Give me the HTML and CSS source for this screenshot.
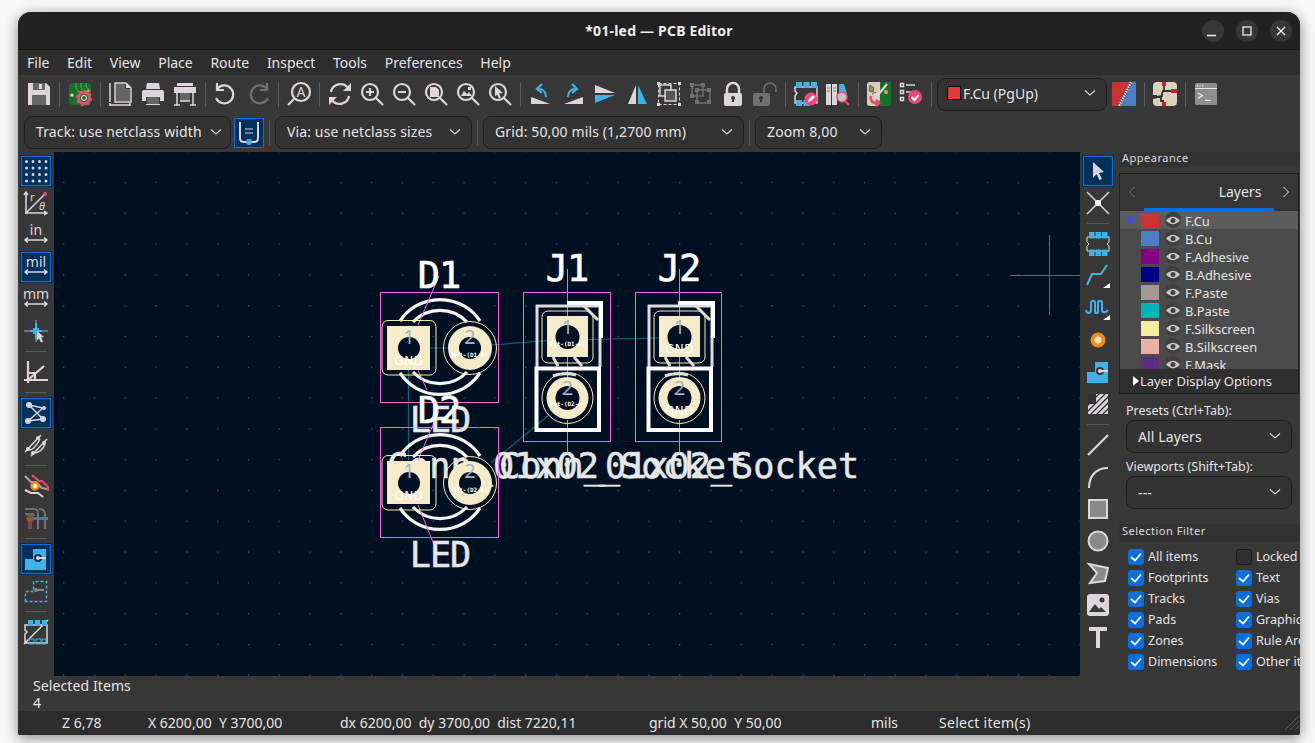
FILE: index.html
```html
<!DOCTYPE html>
<html lang="en">
<head>
<meta charset="utf-8">
<title>*01-led — PCB Editor</title>
<link rel="stylesheet" href="styles.css">
</head>
<body>
<div class="window">
  <header class="titlebar">
    <span></span>
    <div class="title">*01-led — PCB Editor</div>
    <div class="winbtns">
      <span class="winbtn"><svg width="12" height="12" viewBox="0 0 12 12"><path d="M0 10.5h9" class="w"/></svg></span>
      <span class="winbtn"><svg width="12" height="12" viewBox="0 0 12 12"><rect x="2" y="2" width="8" height="8" class="w"/></svg></span>
      <span class="winbtn"><svg width="12" height="12" viewBox="0 0 12 12"><path d="M2 2l8 8M10 2l-8 8" class="w"/></svg></span>
    </div>
  </header>
  <nav class="menubar"><span>File</span><span>Edit</span><span>View</span><span>Place</span><span>Route</span><span>Inspect</span><span>Tools</span><span>Preferences</span><span>Help</span></nav>

  <div class="toolbar">
    <span class="tb"><svg class="ic" viewBox="0 0 24 24"><path class="l" d="M1 1h18l4 4v18H1z"/><path class="g" d="M6 1h12v7H6z"/><path class="l" d="M12 2h3v5h-3z"/><path class="g" d="M5 13h14v10H5z"/></svg></span>
    <i class="vs"></i>
    <span class="tb"><svg class="ic" viewBox="0 0 24 24"><rect x="1" y="1" width="22" height="22" rx="4" fill="#17702b"/><path d="M8 1v6l6 5M13 1v5l6 5M18 1v4l5 4M1 14h5" stroke="#4fae5d" fill="none"/><circle cx="4" cy="13" r="1.5" fill="#f2e5a0"/><circle cx="20" cy="9" r="1.5" fill="#f2a13b"/><circle cx="16" cy="16" r="5.5" fill="none" stroke="#ec4a73" stroke-width="3"/><circle cx="16" cy="16" r="7" fill="none" stroke="#ec4a73" stroke-width="2.5" stroke-dasharray="3 2.5"/><circle cx="16" cy="16" r="2.5" fill="#17702b" stroke="#fff"/></svg></span>
    <i class="vs"></i>
    <span class="tb"><svg class="ic" viewBox="0 0 24 24"><path class="f" d="M1 1v19M6 20V1h11l5 5v14z"/><path class="l" d="M17 1v5h5"/><path class="g" d="M7 2h9v5h5v12H7z"/><path class="f" d="M1 23h20M1 21v3M21 21v3"/></svg></span>
    <span class="tb"><svg class="ic" viewBox="0 0 24 24"><path class="l" d="M6 1h12l1 6H5z"/><path class="l" d="M3 8h18q2 0 2 2v9h-4v-4H5v4H1v-9q0-2 2-2z"/><path class="g" d="M6 15h12v7H6z"/><path class="l" d="M5 22h14v1H5z"/></svg></span>
    <span class="tb"><svg class="ic" viewBox="0 0 24 24"><path class="l" d="M4 1h16v3H4z"/><path class="l" d="M1 5h22v6H1z"/><path class="g" d="M7 11h10v8H7z"/><path class="f" d="M4 11v12M20 11v12M1 23h6M17 23h6M7 19h10"/></svg></span>
    <i class="vs"></i>
    <span class="tb"><svg class="ic" viewBox="0 0 24 24"><path class="f fw" d="M3 7a9 9 0 1 1-1 9M3 1v7h7"/></svg></span>
    <span class="tb"><svg class="ic" viewBox="0 0 24 24"><path class="d dw" d="M21 7a9 9 0 1 0 1 9M21 1v7h-7"/></svg></span>
    <i class="vs"></i>
    <span class="tb"><svg class="ic" viewBox="0 0 24 24"><circle class="f fw" cx="14" cy="10" r="9"/><path class="f fw" d="M7 17l-6 6"/><text x="14" y="15" text-anchor="middle" class="ict ict13">A</text></svg></span>
    <i class="vs"></i>
    <span class="tb"><svg class="ic" viewBox="0 0 24 24"><path class="f fw" d="M3 10a9.5 9.5 0 0 1 17-4M21 14a9.5 9.5 0 0 1-17 4"/><path class="l" d="M23 1v8h-8zM1 23v-8h8z"/></svg></span>
    <span class="tb"><svg class="ic" viewBox="0 0 24 24"><circle class="f fw" cx="10" cy="10" r="8"/><path class="f fw" d="M16 16l7 7M6 10h8M10 6v8"/></svg></span>
    <span class="tb"><svg class="ic" viewBox="0 0 24 24"><circle class="f fw" cx="10" cy="10" r="8"/><path class="f fw" d="M16 16l7 7M6 10h8"/></svg></span>
    <span class="tb"><svg class="ic" viewBox="0 0 24 24"><circle class="f fw" cx="10" cy="10" r="8"/><path class="f fw" d="M16 16l7 7"/><path class="l" d="M6 5h6l3 3v7H6z"/></svg></span>
    <span class="tb"><svg class="ic" viewBox="0 0 24 24"><circle class="f fw" cx="10" cy="10" r="8"/><path class="f fw" d="M16 16l7 7"/><path class="l" d="M5 14l3-5 3 3 2-2 3 4zM12 5h3v3h-3z"/></svg></span>
    <span class="tb"><svg class="ic" viewBox="0 0 24 24"><circle class="f fw" cx="10" cy="10" r="8"/><path class="f fw" d="M16 16l7 7"/><path class="l" d="M7 4l8 7-4 .5 2 4-2 1-2-4-2 2z"/></svg></span>
    <i class="vs"></i>
    <span class="tb"><svg class="ic" viewBox="0 0 24 24"><path class="l" d="M2 22v-7l19 7z"/><path class="bs" d="M17 15c0-5-3-8-7-8M13 2L8 7l5 4"/></svg></span>
    <span class="tb"><svg class="ic" viewBox="0 0 24 24"><path class="l" d="M22 22v-7L3 22z"/><path class="bs" d="M7 15c0-5 3-8 7-8M11 2l5 5-5 4"/></svg></span>
    <span class="tb"><svg class="ic" viewBox="0 0 24 24"><path class="l" d="M2 3l20 8H2z"/><path class="b" d="M2 13h20L2 21z"/></svg></span>
    <span class="tb"><svg class="ic" viewBox="0 0 24 24"><path class="l" d="M11 3v19H3z"/><path class="b" d="M13 3v19h9z"/></svg></span>
    <span class="tb"><svg class="ic" viewBox="0 0 24 24"><rect x="1.5" y="1.5" width="21" height="21" class="dash"/><path class="l" d="M0 0h3v3H0zM21 0h3v3h-3zM0 21h3v3H0zM21 21h3v3h-3z"/><rect x="3" y="3" width="11" height="11" class="f"/><rect x="8" y="8" width="11" height="11" class="l2"/></svg></span>
    <span class="tb"><svg class="ic" viewBox="0 0 24 24"><rect x="3" y="3" width="11" height="11" class="d"/><rect x="8" y="8" width="13" height="13" class="d" fill="#555"/><path class="g2" d="M1 1h4v4H1zM12 1h4v4h-4zM1 12h4v4H1zM6 6h4v4H6zM18 6h4v4h-4zM6 18h4v4H6zM18 18h4v4h-4z"/></svg></span>
    <span class="tb"><svg class="ic" viewBox="0 0 24 24"><path class="f fw2" d="M6 12V7a6 6 0 0 1 12 0v5"/><rect x="3" y="11" width="18" height="13" rx="2" class="l"/><circle cx="12" cy="16" r="2" fill="#383838"/><path d="M11 16h2v4h-2z" fill="#383838"/></svg></span>
    <span class="tb"><svg class="ic" viewBox="0 0 24 24"><path class="d fw2" d="M11 12V7a5.500 5.500 0 0 1 12 0v3"/><rect x="0" y="11" width="17" height="13" rx="2" class="g2"/><circle cx="8" cy="16" r="2" fill="#383838"/><path d="M7 16h2v4H7z" fill="#383838"/></svg></span>
    <i class="vs"></i>
    <span class="tb"><svg class="ic" viewBox="0 0 24 24"><path class="f" d="M1 5v4l2 2-2 3v7h22V5z"/><path class="b" d="M2 0h6v6H2zM9.500 0h6v6h-6zM17 0h6v6h-6zM2 18h6v6H2zM9.500 18h6v6h-6z"/><circle cx="17" cy="17" r="6.500" fill="#ec4a73"/><path d="M14 20l1-3 4-4 2 2-4 4z" fill="#fff"/></svg></span>
    <span class="tb"><svg class="ic" viewBox="0 0 24 24"><path class="l" d="M0 2h5v21H0zM6 2h5v21H6z"/><path d="M1 6h3M7 6h3M1 9h3M7 9h3" stroke="#777"/><path class="b" d="M13 2h5l3 10h-8z"/><circle cx="16" cy="15" r="5" fill="#c4c4c4" stroke="#ec4a73" stroke-width="1.500"/><path d="M19 19l4 4" stroke="#ec4a73" stroke-width="2"/></svg></span>
    <i class="vs"></i>
    <span class="tb"><svg class="ic" viewBox="0 0 24 24"><rect width="24" height="24" rx="3" fill="#d8cfb2"/><path d="M13 0h11v24H10l3-6z" fill="#17702b"/><path d="M20 2L7 18" stroke="#ddd" stroke-width="2"/><path d="M3 3l4 3-1 4-4-1zM9 10l-4 2" stroke="#666" fill="#888"/><circle cx="19" cy="10" r="2" fill="#f2a13b"/><path d="M4 14c-1 5 2 8 7 7M9 18l3 3-3 3" stroke="#ec4a73" stroke-width="2.500" fill="none"/></svg></span>
    <span class="tb"><svg class="ic" viewBox="0 0 24 24"><path class="f" d="M1.500 1.500h3v3h-3zM1.500 8.500h3v3h-3zM1.500 15.500h3v3h-3zM7 3h9M7 10h5"/><circle cx="16" cy="15" r="7" fill="#ec4a73"/><path d="M12.500 15l3 3 4-5" fill="none" stroke="#fff" stroke-width="2"/></svg></span>
    <i class="vs"></i>
    <div class="combo combo-layer"><span class="swatch"></span><span class="combo-txt">F.Cu (PgUp)</span><svg class="chev" viewBox="0 0 12 8"><path d="M1 1.500l5 4.500 5-4.500"/></svg></div>
    <span class="tb tb-after"><svg class="ic" viewBox="0 0 24 24"><path d="M0 0h18L6 24H0z" fill="#c83434"/><path d="M20 0h4v24H8z" fill="#4d7fc4"/><path d="M19 0L7 24" stroke="#fff" stroke-width="2" stroke-dasharray="1.500 1"/></svg></span>
    <i class="vs"></i>
    <span class="tb"><svg class="ic" viewBox="0 0 24 24"><rect width="24" height="24" rx="4" fill="#dcd2b9"/><path d="M9 0h4v4H9zM18 7h6v4h-6zM9 20h4v4H9z" fill="#c8203c"/><path d="M11 4v4l-2 3v3l-9 2M9 9h9M8 14v5h3M0 14h4" stroke="#333" stroke-width="1.800" fill="none"/></svg></span>
    <i class="vs"></i>
    <span class="tb"><svg class="ic ic22" viewBox="0 0 24 24"><rect width="24" height="24" rx="2" fill="#8e8e8e"/><path d="M0 6h24" stroke="#eee"/><path d="M2 3h1M5 3h1M8 3h1" stroke="#eee" stroke-width="2"/><path d="M3 11l5 3-5 3M11 19h6" stroke="#eee" fill="none" stroke-width="1.300"/></svg></span>
  </div>

  <div class="auxbar">
    <div class="combo combo-track"><span class="combo-txt">Track: use netclass width</span><svg class="chev" viewBox="0 0 12 8"><path d="M1 1.500l5 4.500 5-4.500"/></svg></div>
    <span class="auxtoggle"><svg width="24" height="26" viewBox="0 0 24 26"><path d="M3 2v16q0 4 4 4h10q4 0 4-4V2" fill="none" stroke="#ddd5dc" stroke-width="2"/><path d="M8 9h8M8 13h8" stroke="#ddd5dc"/><circle cx="12" cy="22" r="3" fill="#3db3e8"/></svg></span>
    <i class="vs2"></i>
    <div class="combo combo-via"><span class="combo-txt">Via: use netclass sizes</span><svg class="chev" viewBox="0 0 12 8"><path d="M1 1.500l5 4.500 5-4.500"/></svg></div>
    <i class="vs2"></i>
    <div class="combo combo-grid"><span class="combo-txt">Grid: 50,00 mils (1,2700 mm)</span><svg class="chev" viewBox="0 0 12 8"><path d="M1 1.500l5 4.500 5-4.500"/></svg></div>
    <i class="vs2"></i>
    <div class="combo combo-zoom"><span class="combo-txt">Zoom 8,00</span><svg class="chev" viewBox="0 0 12 8"><path d="M1 1.500l5 4.500 5-4.500"/></svg></div>
  </div>

  <div class="main">
    <aside class="ltb">
      <span class="tb on"><svg class="ic" viewBox="0 0 24 24"><path d="M2.500 2.500h21M2.500 9h21M2.500 15.500h21M2.500 22h21" stroke="#ddd5dc" stroke-width="3" stroke-linecap="round" stroke-dasharray="0 6.500" fill="none"/></svg></span>
      <span class="tb"><svg class="ic" viewBox="0 0 24 24"><path class="f" d="M2 23V1M0 4l2-3 2 3M1 22h22M20 20l3 2-3 2M2 22L21 3"/><circle cx="21" cy="3" r="2" fill="#ec4a73"/><text x="6" y="10" class="ict ict11">r</text><text x="15" y="19" class="ict ict11 ital">θ</text></svg></span>
      <span class="tb"><svg class="ic" viewBox="0 0 24 24"><text x="12" y="12" text-anchor="middle" class="ict ict13">in</text><path class="f" d="M1 17h22M4 14.500L1 17l3 2.500M20 14.500l3 2.500-3 2.500"/></svg></span>
      <span class="tb on"><svg class="ic" viewBox="0 0 24 24"><text x="12" y="12" text-anchor="middle" class="ict ict13">mil</text><path class="f" d="M1 17h22M4 14.500L1 17l3 2.500M20 14.500l3 2.500-3 2.500"/></svg></span>
      <span class="tb"><svg class="ic" viewBox="0 0 24 24"><text x="12" y="12" text-anchor="middle" class="ict ict13">mm</text><path class="f" d="M1 17h22M4 14.500L1 17l3 2.500M20 14.500l3 2.500-3 2.500"/></svg></span>
      <span class="tb"><svg class="ic" viewBox="0 0 24 24"><path d="M0 12h24M12 1v22" stroke="#a9a3a8"/><path class="b" d="M9 9h6v6H9zM11 4h2v16h-2zM6 11h12v2H6z"/><path class="l" d="M13 12l7 6-3 .5 2 4-2 1-2-4-2 2z"/></svg></span>
      <i class="hs"></i>
      <span class="tb"><svg class="ic" viewBox="0 0 24 24"><path class="f fw" d="M4 1v22M0 20h24M4 20L20 6M4 13h7v7"/></svg></span>
      <i class="hs"></i>
      <span class="tb on"><svg class="ic" viewBox="0 0 24 24"><path class="f" d="M5 4l14 14M5 4l14 3M19 7L4 20M4 20l15-2"/><circle cx="5" cy="4" r="3" class="l"/><circle cx="20" cy="7" r="2" class="l"/><circle cx="4" cy="20" r="3" class="l"/><circle cx="19" cy="18" r="3" class="l"/></svg></span>
      <span class="tb"><svg class="ic" viewBox="0 0 24 24"><path class="f" d="M1 19L17 2M7 23L23 6"/><path class="f" d="M5 17c4 0 8-5 11-11M9 20c5 0 10-3 12-9"/><circle cx="4" cy="16" r="2" class="l"/><circle cx="14" cy="5" r="2" class="l"/><circle cx="9" cy="20" r="2" class="l"/><circle cx="20" cy="10" r="2" class="l"/></svg></span>
      <i class="hs"></i>
      <span class="tb"><svg class="ic" viewBox="0 0 24 24"><path d="M1 2l6 6h5l6 6 5 1" stroke="#a9a3a8" stroke-width="2" fill="none"/><path d="M8 1l7 6h3l6 6v4" stroke="#ec4a73" stroke-width="2" fill="none"/><path d="M1 16l6 3h7l5 4" stroke="#ddd5dc" stroke-width="2" fill="none"/><circle cx="11" cy="12" r="3.500" fill="#fff" stroke="#f28c14" stroke-width="2.500"/></svg></span>
      <span class="tb"><svg class="ic" viewBox="0 0 24 24"><path d="M1 3h9q4 0 4 4v16M15 3q6 0 6 5v15M1 8h8q1 0 1 2" stroke="#707070" stroke-width="2" fill="none"/><path d="M6 13v10" stroke="#84414f" stroke-width="4"/><path d="M8 11h16v3H8z" fill="#4a7c99"/><circle cx="6" cy="12" r="3.500" fill="#8d5a2c"/></svg></span>
      <i class="hs"></i>
      <span class="tb on"><svg class="ic" viewBox="0 0 24 24"><path class="b" d="M1 23V12h8V2h13v21z"/><circle cx="14" cy="11" r="4" fill="#00305c"/><path d="M13 10h9v2h-9z" fill="#ddd5dc"/><circle cx="14" cy="11" r="2" fill="#ddd5dc"/></svg></span>
      <span class="tb"><svg class="ic" viewBox="0 0 24 24"><path d="M1.500 22.500V12.500h8v-10h13v20z" fill="none" stroke="#3db3e8" stroke-width="1.500" stroke-dasharray="3 2"/><path class="g3" d="M11 10h9v2h-9z"/><circle cx="12" cy="11" r="2" class="g3"/></svg></span>
      <i class="hs"></i>
      <span class="tb"><svg class="ic" viewBox="0 0 24 24"><path class="f" d="M1 5v5l2 2-2 2v9h22V5zM0 24L24 0"/><path class="b" d="M4 0h5v6H4zM11 0h5v6h-5zM18 0h5v6h-5z"/><path d="M5 19h5v5H5zM12 19h5v5h-5zM18 19h4v5h-4z" fill="none" stroke="#3db3e8"/></svg></span>
    </aside>

    <div class="canvas">
      <svg class="board" viewBox="54 152 1026 524" width="1026" height="524">
        <defs>
          <pattern id="griddots" x="617.500" y="243.500" width="30.800" height="30.800" patternUnits="userSpaceOnUse"><rect width="1.200" height="1.200" fill="#56606c"/></pattern>
        </defs>
        <rect x="54" y="152" width="1026" height="524" fill="#001023"/>
        <rect x="54" y="152" width="1026" height="524" fill="url(#griddots)"/>

        <g class="rats">
          <path d="M430 348h18M492 345l50-4M540 341l70-2M610 339l49-1M408.500 370v90M491 463l58-48"/>
        </g>

        <g class="valtext">
          <text x="499" y="478">Conn_01x02_Socket</text>
          <text x="387" y="478">Conn_01x02_Socket</text>
        </g>

        <g class="silk">
          <path d="M400 321A48 48 0 0 1 480 321M400 373A48 48 0 0 0 480 373M413 322A37 37 0 0 1 467 322M413 372A37 37 0 0 0 467 372"/>
          <path d="M400 456A48 48 0 0 1 480 456M400 508A48 48 0 0 0 480 508M413 457A37 37 0 0 1 467 457M413 507A37 37 0 0 0 467 507"/>
        </g>

        <g class="mag">
          <rect x="380.500" y="292.500" width="118" height="110"/>
          <rect x="380.500" y="427.500" width="118" height="110"/>
          <rect x="523.500" y="292.500" width="87" height="149"/>
          <rect x="635.500" y="292.500" width="86" height="149"/>
          <path d="M439 276L418 325M418 370L427 390M439 411L418 460M418 505L437 552M567.500 269V316M567.500 356V378M567.500 420V453M679.500 269V316M679.500 356V378M679.500 420V453"/>
        </g>

        <g>
          <path class="gsilk" d="M537 367V306H600V367"/>
          <path class="wsilk" d="M567 303H601V338M536.500 368.500H599V430H536.500Z"/>
          <path class="gsilk" d="M583 305l15 15M553 357l5 9M574 357l8 9M553 376q10-4 23-1"/>
        </g>
        <g>
          <path class="gsilk" d="M649 367V306H712V367"/>
          <path class="wsilk" d="M678 303H713V338M648.500 368.500H711V430H648.500Z"/>
          <path class="gsilk" d="M695 305l15 15M665 357l5 9M686 357l8 9M665 376q10-4 23-1"/>
        </g>

        <g class="pads">
          <rect x="387" y="326" width="43" height="44" class="pad"/><circle cx="409" cy="348" r="11" class="hole"/>
          <rect x="382" y="320.500" width="54" height="54.500" rx="6" class="keep"/>
          <circle cx="470" cy="348" r="22" class="pad"/><circle cx="470" cy="348" r="11" class="hole"/><circle cx="470" cy="348" r="26.500" class="keep"/>

          <rect x="387" y="461" width="43" height="43" class="pad"/><circle cx="409" cy="483" r="11" class="hole"/>
          <rect x="382" y="455.500" width="54" height="54.500" rx="6" class="keep"/>
          <circle cx="470" cy="483" r="22" class="pad"/><circle cx="470" cy="483" r="11" class="hole"/><circle cx="470" cy="483" r="26.500" class="keep"/>

          <rect x="547" y="316" width="41" height="41" class="pad"/><circle cx="567.500" cy="337" r="12" class="hole"/>
          <rect x="542" y="311" width="51" height="52" rx="6" class="keep"/>
          <circle cx="567.500" cy="398" r="21" class="pad"/><circle cx="567.500" cy="398" r="12" class="hole"/><circle cx="567.500" cy="398" r="25.500" class="keep"/>

          <rect x="659" y="316" width="41" height="41" class="pad"/><circle cx="679.500" cy="337" r="12" class="hole"/>
          <rect x="654" y="311" width="51" height="52" rx="6" class="keep"/>
          <circle cx="679.500" cy="398" r="21" class="pad"/><circle cx="679.500" cy="398" r="12" class="hole"/><circle cx="679.500" cy="398" r="25.500" class="keep"/>
        </g>

        <g class="padnum">
          <text x="409" y="344">1</text><text x="470" y="344">2</text>
          <text x="409" y="478">1</text><text x="470" y="478">2</text>
          <text x="567.500" y="334">1</text><text x="567.500" y="395">2</text>
          <text x="679.500" y="334">1</text><text x="679.500" y="395">2</text>
        </g>
        <g class="gnd">
          <text x="409" y="365">GND</text><text x="409" y="500">GND</text>
          <text x="679.500" y="353">GND</text><text x="679.500" y="415">GND</text>
        </g>
        <g class="netname">
          <text x="470" y="357">Net-(D1-A)</text><text x="470" y="492">Net-(D2-A)</text>
          <text x="567.500" y="346">Net-(D1-A)</text><text x="567.500" y="406">Net-(D2-A)</text>
        </g>

        <g class="ledtext">
          <text x="440" y="432">LED</text>
          <text x="440" y="567">LED</text>
        </g>
        <g class="reftext">
          <text x="439" y="288">D1</text>
          <text x="439" y="423">D2</text>
          <text x="567" y="281">J1</text>
          <text x="679" y="281">J2</text>
        </g>
        <path class="cross" d="M1010 275.500H1080M1049.500 235V315"/>
      </svg>
    </div>

    <aside class="rtb">
      <span class="tb on"><svg class="ic" viewBox="0 0 24 24"><path class="l" d="M7 3l11 10-5 1 3 6-2.500 1-3-6-3.500 4z"/></svg></span>
      <span class="tb"><svg class="ic" viewBox="0 0 24 24"><path class="f" d="M1 1l22 22M23 1L1 23"/><circle cx="12" cy="12" r="3" fill="#fff"/></svg></span>
      <i class="hs"></i>
      <span class="tb"><svg class="ic" viewBox="0 0 24 24"><path class="f1" d="M1 5v5l2 2-2 2v5h22v-5l-2-2 2-2V5z"/><path class="b" d="M3 0h5.500v6.500H3zM9.500 0H15v6.500H9.500zM16 0h5.500v6.500H16zM3 17.500h5.500V24H3zM9.500 17.500H15V24H9.500zM16 17.500h5.500V24H16z"/></svg></span>
      <span class="tb"><svg class="ic" viewBox="0 0 24 24"><path d="M1 21L6 10H15L21 1" stroke="#3db3e8" stroke-width="2" fill="none"/><path d="M24 19v5h-7z" fill="#fff"/></svg></span>
      <span class="tb"><svg class="ic" viewBox="0 0 24 24"><path d="M0 14c1 4 5 4 5 0V7c0-3 4-3 4 0v8c0 3 3 3 3 0V7c0-3 4-3 4 0v7c0 3 4 3 6 0" stroke="#3db3e8" stroke-width="2" fill="none"/><path d="M24 19v5h-7z" fill="#fff"/></svg></span>
      <span class="tb"><svg class="ic" viewBox="0 0 24 24"><circle cx="12" cy="12" r="5.500" fill="#f2e4c6" stroke="#f28c14" stroke-width="4"/></svg></span>
      <span class="tb"><svg class="ic" viewBox="0 0 24 24"><path class="b" d="M1 23V12h8V2h13v21z"/><circle cx="14" cy="11" r="4" fill="#383838"/><path d="M13 10h9v2h-9z" fill="#ddd5dc"/><circle cx="14" cy="11" r="2" fill="#ddd5dc"/></svg></span>
      <span class="tb"><svg class="ic" viewBox="0 0 24 24"><defs><clipPath id="hatchclip"><path d="M2 22V12h8V2h12v20z"/></clipPath></defs><rect x="2" y="2" width="20" height="20" fill="#333"/><g clip-path="url(#hatchclip)"><path d="M-4 10L14-8M-4 16L20-8M-4 22L26-8M-2 26L28-4M4 26L28 2M10 26L28 8M16 26L28 14" stroke="#ddd5dc" stroke-width="3"/></g></svg></span>
      <i class="hs"></i>
      <span class="tb"><svg class="ic" viewBox="0 0 24 24"><path class="f fw" d="M2 22L22 2"/></svg></span>
      <span class="tb"><svg class="ic" viewBox="0 0 24 24"><path class="f fw" d="M3 23C3 11 10 3 22 3"/></svg></span>
      <span class="tb"><svg class="ic" viewBox="0 0 24 24"><rect x="3" y="3" width="18" height="18" fill="#8a8a8a" stroke="#ddd5dc" stroke-width="2"/></svg></span>
      <span class="tb"><svg class="ic" viewBox="0 0 24 24"><circle cx="12" cy="12" r="9.500" fill="#8a8a8a" stroke="#ddd5dc" stroke-width="2"/></svg></span>
      <span class="tb"><svg class="ic" viewBox="0 0 24 24"><path d="M3 3l19 4-3 13-15 2 7-10z" fill="#8a8a8a" stroke="#ddd5dc" stroke-width="2"/></svg></span>
      <span class="tb"><svg class="ic" viewBox="0 0 24 24"><rect x="1" y="1" width="22" height="22" rx="3" class="l"/><path d="M3 19l6-8 4 5 2-2 5 5z" fill="#383838"/><circle cx="16" cy="7" r="2.500" fill="#383838"/></svg></span>
      <span class="tb"><svg class="ic" viewBox="0 0 24 24"><path class="l" d="M3 2h18v4h-7v17h-4V6H3z"/></svg></span>
    </aside>

    <aside class="side">
      <div class="panelhead">Appearance</div>
      <div class="appbox">
        <div class="tabs"><svg class="tabarrow" viewBox="0 0 8 12"><path d="M6.500 1L1.500 6l5 5" stroke="#777"/></svg><span class="tabname">Layers</span><svg class="tabarrow" viewBox="0 0 8 12"><path d="M1.500 1l5 5-5 5" stroke="#ddd"/></svg></div>
        <div class="layers">
          <div class="layer sel"><i class="marker"></i><i class="sw c1"></i><i class="eye"><svg width="14" height="9" viewBox="0 0 14 9"><path d="M0 4.500Q7-3 14 4.500 7 12 0 4.500z" fill="#c9c4c8"/><circle cx="7" cy="4.500" r="2.500" fill="#444"/></svg></i><span>F.Cu</span></div>
          <div class="layer"><i class="marker"></i><i class="sw c2"></i><i class="eye"><svg width="14" height="9" viewBox="0 0 14 9"><path d="M0 4.500Q7-3 14 4.500 7 12 0 4.500z" fill="#c9c4c8"/><circle cx="7" cy="4.500" r="2.500" fill="#444"/></svg></i><span>B.Cu</span></div>
          <div class="layer"><i class="marker"></i><i class="sw c3"></i><i class="eye"><svg width="14" height="9" viewBox="0 0 14 9"><path d="M0 4.500Q7-3 14 4.500 7 12 0 4.500z" fill="#c9c4c8"/><circle cx="7" cy="4.500" r="2.500" fill="#444"/></svg></i><span>F.Adhesive</span></div>
          <div class="layer"><i class="marker"></i><i class="sw c4"></i><i class="eye"><svg width="14" height="9" viewBox="0 0 14 9"><path d="M0 4.500Q7-3 14 4.500 7 12 0 4.500z" fill="#c9c4c8"/><circle cx="7" cy="4.500" r="2.500" fill="#444"/></svg></i><span>B.Adhesive</span></div>
          <div class="layer"><i class="marker"></i><i class="sw c5"></i><i class="eye"><svg width="14" height="9" viewBox="0 0 14 9"><path d="M0 4.500Q7-3 14 4.500 7 12 0 4.500z" fill="#c9c4c8"/><circle cx="7" cy="4.500" r="2.500" fill="#444"/></svg></i><span>F.Paste</span></div>
          <div class="layer"><i class="marker"></i><i class="sw c6"></i><i class="eye"><svg width="14" height="9" viewBox="0 0 14 9"><path d="M0 4.500Q7-3 14 4.500 7 12 0 4.500z" fill="#c9c4c8"/><circle cx="7" cy="4.500" r="2.500" fill="#444"/></svg></i><span>B.Paste</span></div>
          <div class="layer"><i class="marker"></i><i class="sw c7"></i><i class="eye"><svg width="14" height="9" viewBox="0 0 14 9"><path d="M0 4.500Q7-3 14 4.500 7 12 0 4.500z" fill="#c9c4c8"/><circle cx="7" cy="4.500" r="2.500" fill="#444"/></svg></i><span>F.Silkscreen</span></div>
          <div class="layer"><i class="marker"></i><i class="sw c8"></i><i class="eye"><svg width="14" height="9" viewBox="0 0 14 9"><path d="M0 4.500Q7-3 14 4.500 7 12 0 4.500z" fill="#c9c4c8"/><circle cx="7" cy="4.500" r="2.500" fill="#444"/></svg></i><span>B.Silkscreen</span></div>
          <div class="layer"><i class="marker"></i><i class="sw c9"></i><i class="eye"><svg width="14" height="9" viewBox="0 0 14 9"><path d="M0 4.500Q7-3 14 4.500 7 12 0 4.500z" fill="#c9c4c8"/><circle cx="7" cy="4.500" r="2.500" fill="#444"/></svg></i><span>F.Mask</span></div>
        </div>
        <div class="ldo"><svg width="6" height="10" viewBox="0 0 6 10"><path d="M0 0l6 5-6 5z" fill="#fff"/></svg><span>Layer Display Options</span></div>
      </div>
      <label class="fieldlabel">Presets (Ctrl+Tab):</label>
      <div class="combo combo-side"><span class="combo-txt">All Layers</span><svg class="chev" viewBox="0 0 12 8"><path d="M1 1.500l5 4.500 5-4.500"/></svg></div>
      <label class="fieldlabel fl2">Viewports (Shift+Tab):</label>
      <div class="combo combo-side"><span class="combo-txt">---</span><svg class="chev" viewBox="0 0 12 8"><path d="M1 1.500l5 4.500 5-4.500"/></svg></div>
      <div class="panelhead ph2">Selection Filter</div>
      <div class="filters">
        <div class="chk"><i class="box on"><svg viewBox="0 0 16 16"><path d="M3 8l4 3.500L13 4.500"/></svg></i><span>All items</span></div>
        <div class="chk"><i class="box"></i><span>Locked items</span></div>
        <div class="chk"><i class="box on"><svg viewBox="0 0 16 16"><path d="M3 8l4 3.500L13 4.500"/></svg></i><span>Footprints</span></div>
        <div class="chk"><i class="box on"><svg viewBox="0 0 16 16"><path d="M3 8l4 3.500L13 4.500"/></svg></i><span>Text</span></div>
        <div class="chk"><i class="box on"><svg viewBox="0 0 16 16"><path d="M3 8l4 3.500L13 4.500"/></svg></i><span>Tracks</span></div>
        <div class="chk"><i class="box on"><svg viewBox="0 0 16 16"><path d="M3 8l4 3.500L13 4.500"/></svg></i><span>Vias</span></div>
        <div class="chk"><i class="box on"><svg viewBox="0 0 16 16"><path d="M3 8l4 3.500L13 4.500"/></svg></i><span>Pads</span></div>
        <div class="chk"><i class="box on"><svg viewBox="0 0 16 16"><path d="M3 8l4 3.500L13 4.500"/></svg></i><span>Graphics</span></div>
        <div class="chk"><i class="box on"><svg viewBox="0 0 16 16"><path d="M3 8l4 3.500L13 4.500"/></svg></i><span>Zones</span></div>
        <div class="chk"><i class="box on"><svg viewBox="0 0 16 16"><path d="M3 8l4 3.500L13 4.500"/></svg></i><span>Rule Areas</span></div>
        <div class="chk"><i class="box on"><svg viewBox="0 0 16 16"><path d="M3 8l4 3.500L13 4.500"/></svg></i><span>Dimensions</span></div>
        <div class="chk"><i class="box on"><svg viewBox="0 0 16 16"><path d="M3 8l4 3.500L13 4.500"/></svg></i><span>Other items</span></div>
      </div>
    </aside>
  </div>

  <div class="msg"><div>Selected Items</div><div>4</div></div>
  <footer class="status">
    <span class="st st1">Z 6,78</span>
    <span class="st st2">X 6200,00  Y 3700,00</span>
    <span class="st st3">dx 6200,00  dy 3700,00  dist 7220,11</span>
    <span class="st st4">grid X 50,00  Y 50,00</span>
    <span class="st st5">mils</span>
    <span class="st st6">Select item(s)</span>
    <svg class="grip" width="18" height="18" viewBox="0 0 18 18"><path d="M17 3L3 17M17 8L8 17M17 13l-4 4" stroke="#555" fill="none"/></svg>
  </footer>
</div>
</body>
</html>
```
FILE: styles.css
```css
* { box-sizing: border-box; }
html, body { margin: 0; height: 100%; }
body {
  width: 1315px; height: 743px; overflow: hidden;
  background: #f7f7f7;
  font-family: "Noto Sans", "Open Sans", sans-serif;
  font-size: 14px; color: #e6e3e6;
}
i { display: block; font-style: normal; }
.window {
  margin: 12px 0 0 18px; width: 1282px; height: 723px;
  background: #383838; border-radius: 13px 13px 2px 2px;
  box-shadow: 0 3px 14px rgba(0,0,0,.45);
  display: flex; flex-direction: column; overflow: hidden;
}
.titlebar {
  height: 38px; flex: none; background: #222; border-bottom: 1px solid #191919;
  display: grid; grid-template-columns: 1fr auto 1fr; align-items: center;
}
.title { font-weight: 700; font-size: 14px; color: #efefef; letter-spacing: .2px; }
.winbtns { display: flex; justify-content: flex-end; gap: 12px; padding-right: 8px; }
.winbtn { width: 22px; height: 22px; border-radius: 50%; background: #373737; display: flex; align-items: center; justify-content: center; }
.w { fill: none; stroke: #f0f0f0; stroke-width: 1.3; }
.menubar { height: 25px; flex: none; background: #2e2e2e; display: flex; align-items: center; padding-left: 1px; gap: 1.700px; }
.menubar span { padding: 0 8px; font-size: 14px; }
.toolbar { height: 38px; flex: none; display: flex; align-items: center; padding-left: 5px; }
.tb { width: 32px; height: 32px; flex: none; display: flex; align-items: center; justify-content: center; }
.ic { width: 24px; height: 24px; display: block; overflow: visible; }
.ic22 { width: 22px; height: 22px; }
.vs { width: 9px; height: 25px; flex: none; display: flex; justify-content: center; }
.vs::before { content: ""; width: 1px; background: #5a5a5a; }
.vs2 { width: 1px; height: 25px; margin: 0 5px; background: #5a5a5a; flex: none; }
.hs { height: 9px; width: 22px; margin: 0 auto; display: flex; align-items: center; }
.hs::before { content: ""; height: 1px; width: 22px; background: #5a5a5a; }
.l { fill: #ddd5dc; }
.l2 { fill: #585858; stroke: #ddd5dc; stroke-width: 1.500; }
.g { fill: #666; }
.g2 { fill: #707070; }
.g3 { fill: #8a8a8a; }
.b { fill: #3db3e8; }
.f { fill: none; stroke: #ddd5dc; stroke-width: 1.500; }
.f1 { fill: none; stroke: #ddd5dc; stroke-width: 1; }
.fw { stroke-width: 2.200; }
.fw2 { stroke-width: 2.500; }
.d { fill: none; stroke: #707070; stroke-width: 1.500; }
.dw { stroke-width: 2.200; }
.bs { fill: none; stroke: #3db3e8; stroke-width: 2.200; }
.dash { fill: none; stroke: #ddd5dc; stroke-dasharray: 3 2; }
.ict { font-family: "Noto Sans", sans-serif; fill: #ddd5dc; }
.ict11 { font-size: 11px; }
.ict13 { font-size: 14px; }
.ital { font-style: italic; }
.auxbar { height: 39px; flex: none; display: flex; align-items: center; padding-left: 6px; }
.combo {
  height: 33px; flex: none; border: 1px solid #1f1f1f; border-radius: 8px; background: #333;
  display: flex; align-items: center; justify-content: space-between; padding: 0 10px 2px 11px;
}
.combo-txt { white-space: nowrap; letter-spacing: .12px; }
.chev { width: 12px; height: 8px; flex: none; }
.chev path { fill: none; stroke: #d8d8d8; stroke-width: 1.200; }
.combo-track { width: 207px; padding-right: 8px; }
.combo-via { width: 197px; }
.combo-grid { width: 261px; }
.combo-zoom { width: 127px; }
.combo-layer { width: 170px; margin-left: 1px; justify-content: flex-start; padding-left: 9px; }
.combo-layer .combo-txt { letter-spacing: 0; }
.combo-layer .chev { margin-left: auto; }
.swatch { width: 14px; height: 14px; background: #e03c3c; border: 1px solid #000; margin-right: 2px; flex: none; }
.tb-after { margin-left: 1px; }
.auxtoggle {
  width: 30px; height: 30px; margin-left: 3px; flex: none; background: #00305c; border: 1.500px solid #0a6fdc;
  display: flex; align-items: center; justify-content: center;
}
.main { height: 524px; flex: none; display: flex; }
.ltb { width: 36px; flex: none; padding-top: 3px; display: flex; flex-direction: column; align-items: center; }
.rtb { width: 38px; flex: none; padding: 3px 3px 0 0; display: flex; flex-direction: column; align-items: center; }
.tb.on { background: #00305c; outline: 1.500px solid #0a6fdc; outline-offset: -2.500px; }
.canvas { width: 1026px; flex: none; background: #001023; }
.board { display: block; }
.rats path { fill: none; stroke: #0c6474; stroke-width: 1.200; }
.silk path { fill: none; stroke: #f4f4f4; stroke-width: 3.200; }
.mag rect, .mag path { fill: none; stroke: #ff5fdc; stroke-width: 1; }
.gsilk { fill: none; stroke: #dcdde0; stroke-width: 3; }
.wsilk { fill: none; stroke: #fff; stroke-width: 4; }
.pad { fill: #f5ebc8; }
.hole { fill: #001023; }
.keep { fill: none; stroke: #f5ebb0; stroke-width: 1; }
.padnum text { font-family: "Noto Sans", sans-serif; font-weight: 400; font-size: 20px; fill: #a6b3c2; text-anchor: middle; }
.gnd text { font-family: "DejaVu Sans", sans-serif; font-size: 12px; fill: #fff; text-anchor: middle; letter-spacing: .5px; }
.netname text { font-family: "DejaVu Sans Mono", monospace; font-size: 6px; fill: #fff; font-weight: 700; text-anchor: middle; }
.valtext text { font-family: "DejaVu Sans Mono", monospace; font-size: 35.200px; fill: #e6e6e6; stroke: #e6e6e6; stroke-width: .5; }
.ledtext text { font-family: "DejaVu Sans Mono", monospace; font-size: 35.200px; fill: #e6e6e6; stroke: #e6e6e6; stroke-width: .5; text-anchor: middle; letter-spacing: -1px; }
.reftext text { font-family: "DejaVu Sans Mono", monospace; font-size: 37px; fill: #fff; stroke: #fff; stroke-width: .6; text-anchor: middle; letter-spacing: -1px; }
.cross { fill: none; stroke: #56697a; stroke-width: 1; }
.side { width: 182px; flex: none; overflow: hidden; display: flex; flex-direction: column; padding-left: 1px; }
.panelhead { height: 15px; flex: none; background: #333; font-size: 11px; letter-spacing: .5px; padding-left: 3px; line-height: 12px; color: #dcdcdc; }
.ph2 { height: 18px; line-height: 13px; margin-top: 15px; }
.appbox { margin-top: 6px; height: 221px; width: 180px; flex: none; border: 1px solid #1f1f1f; background: #333; display: flex; flex-direction: column; }
.tabs { height: 37px; flex: none; position: relative; display: flex; align-items: center; justify-content: space-between; padding: 0 8px 2px; background: #363636; }
.tabs::after { content: ""; position: absolute; left: 24px; width: 130px; bottom: 0; height: 3px; background: #0a6fdc; }
.tabname { margin-left: 62px; font-size: 14px; }
.tabarrow { width: 8px; height: 12px; fill: none; flex: none; }
.layers { height: 158px; flex: none; overflow: hidden; background: #4b4b4b; }
.layer { height: 18px; display: flex; align-items: center; font-size: 12.900px; color: #e4e4e4; }
.layer span { padding-top: 2px; margin-left: -1px; }
.layer.sel { background: #5c5c5c; }
.marker { width: 8px; height: 11px; margin: 0 6px 0 7px; flex: none; }
.sel .marker { background: #3a4cf5; clip-path: polygon(0 0, 100% 50%, 0 100%); }
.sw { width: 18px; height: 15px; flex: none; }
.eye { width: 16px; height: 16px; border-radius: 50%; background: #404040; margin: 0 5px 0 6px; display: flex; align-items: center; justify-content: center; flex: none; }
.c1 { background: #c83434; } .c2 { background: #4d7fc4; } .c3 { background: #840084; } .c4 { background: #000084; }
.c5 { background: #a39994; } .c6 { background: #00b5b5; } .c7 { background: #f2eda1; } .c8 { background: #e8b2a7; } .c9 { background: #5a2e80; }
.ldo { height: 24px; flex: none; background: #2f2f2f; display: flex; align-items: center; padding-left: 13px; gap: 1px; font-size: 13px; letter-spacing: -.05px; }
.fieldlabel { font-size: 12.500px; padding-left: 7px; margin-top: 8px; height: 18px; line-height: 18px; flex: none; }
.fl2 { margin-top: 5px; }
.combo-side { width: 166px; margin-left: 7px; padding-left: 11px; padding-bottom: 1px; }
.filters { display: grid; grid-template-columns: 108px 120px; grid-auto-rows: 21px; padding: 4px 0 0 9px; width: 240px; }
.chk { display: flex; align-items: center; gap: 4px; font-size: 12.500px; white-space: nowrap; }
.box { width: 16px; height: 16px; border-radius: 3px; border: 1px solid #1f1f1f; background: #303030; flex: none; }
.box.on { background: #0a6fdc; border: 0; }
.box svg { display: block; }
.box path { fill: none; stroke: #fff; stroke-width: 1.800; }
.msg { height: 35px; flex: none; padding: 1px 0 0 15px; font-size: 14px; line-height: 17px; letter-spacing: .1px; }
.status { height: 24px; flex: none; background: #2d2d2d; display: flex; align-items: center; font-size: 14px; padding-bottom: 2px; }
.st { white-space: pre; flex: none; }
.st1 { width: 86px; margin-left: 44px; }
.st2 { width: 192px; }
.st3 { width: 309px; }
.st4 { width: 222px; }
.st5 { width: 68px; }
.st6 { letter-spacing: .3px; }
.grip { margin-left: auto; }
```
